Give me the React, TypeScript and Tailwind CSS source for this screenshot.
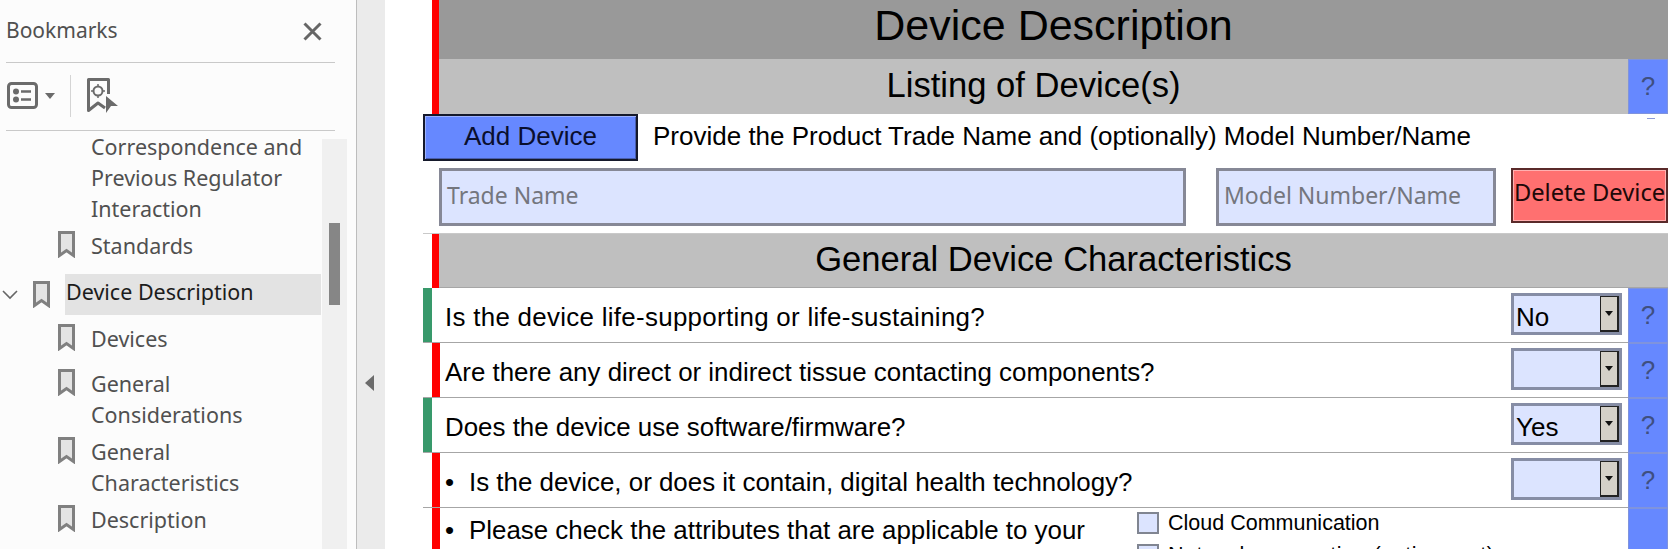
const sans = "font-['Noto_Sans','Open_Sans',sans-serif]";
const arial = "font-['Liberation_Sans',Arial,sans-serif]";

const BookmarkIcon = () => (
	<svg width="17" height="27" viewBox="0 0 17 27" className="shrink-0">
		<path d="M1.5 1.5H15.5V24.5L8.5 19.5L1.5 24.5Z" fill="#e4e4e4" stroke="#808080" strokeWidth="3" />
	</svg>
);

const BookmarkItem = ({ lines, mt }: { lines: string[]; mt: string }) => (
	<div className={`flex pl-[58px] ${mt}`}>
		<BookmarkIcon />
		<div className="ml-4 text-[21.5px] leading-[31px] text-[#505050] -mt-[1px]">
			{lines.map((line) => (
				<div key={line}>{line}</div>
			))}
		</div>
	</div>
);

const Sidebar = () => (
	<div className={`w-[356px] h-full shrink-0 bg-[#fcfcfc] ${sans} flex flex-col overflow-hidden`}>
		<div className="h-[62px] mx-[6px] w-[316px] border-b border-[#c9c9c9] flex items-center justify-between pr-[13px] box-content">
			<span className="text-[21px] text-[#505050]">Bookmarks</span>
			<svg width="19" height="19" viewBox="0 0 19 19">
				<path d="M1.5 1.5L17.5 17.5M17.5 1.5L1.5 17.5" stroke="#666" strokeWidth="3" />
			</svg>
		</div>
		<div className="h-[65px] mx-[6px] w-[329px] border-b border-[#c9c9c9] flex items-center pb-[2px] box-content">
			<svg width="32" height="27" viewBox="0 0 32 27" className="ml-[1px]">
				<rect x="1.5" y="1.5" width="28" height="24" rx="3" fill="none" stroke="#6b6b6b" strokeWidth="3" />
				<circle cx="9" cy="9.5" r="3" fill="#6b6b6b" />
				<circle cx="9" cy="17.5" r="3" fill="#6b6b6b" />
				<path d="M14 9.5H24M14 17.5H24" stroke="#6b6b6b" strokeWidth="2.5" />
			</svg>
			<svg width="10" height="6" viewBox="0 0 10 6" className="ml-[6px]">
				<path d="M0 0H10L5 6Z" fill="#6b6b6b" />
			</svg>
			<div className="w-px h-[42px] bg-[#d4d4d4] ml-[15px]" />
			<svg width="32" height="36" viewBox="0 0 32 36" className="ml-[16px]">
				<path d="M21.5 16V1.5H1.5V32.5L11 25L18 30" fill="none" stroke="#6b6b6b" strokeWidth="3" strokeLinejoin="round" />
				<circle cx="11" cy="13" r="4.5" fill="none" stroke="#6b6b6b" strokeWidth="2" />
				<path d="M11 6V9M11 17V20M4 13H7M15 13H18" stroke="#6b6b6b" strokeWidth="1.5" />
				<path d="M19 18L31 28H24L19 35Z" fill="#6b6b6b" />
			</svg>
		</div>
		<div className="relative flex-1">
			<div className="absolute left-[322px] top-[8px] w-[25px] h-[420px] bg-[#f0f0f0]">
				<div className="absolute left-[7px] top-[84px] w-[11px] h-[82px] bg-[#868686]" />
			</div>
			<div className="pl-[91px] text-[21.5px] leading-[31px] text-[#505050]">
				<div>Correspondence and</div>
				<div>Previous Regulator</div>
				<div>Interaction</div>
			</div>
			<BookmarkItem lines={["Standards"]} mt="mt-[7px]" />
			<div className="flex items-center h-[41px] mt-[13px]">
				<svg width="16" height="10" viewBox="0 0 16 10" className="ml-[2px]">
					<path d="M1 1L8 8L15 1" fill="none" stroke="#666" strokeWidth="1.6" />
				</svg>
				<div className="ml-[15px]">
					<BookmarkIcon />
				</div>
				<div className="ml-[15px] w-[256px] h-[41px] bg-[#e3e3e3] pl-[1px] text-[21.5px] leading-[36px] text-[#1c1c1c]">Device Description</div>
			</div>
			<BookmarkItem lines={["Devices"]} mt="mt-[9px]" />
			<BookmarkItem lines={["General", "Considerations"]} mt="mt-[15px]" />
			<BookmarkItem lines={["General", "Characteristics"]} mt="mt-[7px]" />
			<BookmarkItem lines={["Description"]} mt="mt-[7px]" />
		</div>
	</div>
);

const Help = ({ h, mark = true }: { h: string; mark?: boolean }) => (
	<div className={`w-10 shrink-0 ${h} bg-[#6688ff] border border-[#7f93dd] flex items-center justify-center text-[26px] text-[#3f4f80]`}>{mark ? "?" : ""}</div>
);

const Dropdown = ({ value }: { value: string }) => (
	<div className="w-[111px] h-[42px] mt-[5px] border-[3px] border-[#868da5] bg-[#dce4ff] flex items-stretch justify-between">
		<span className="pl-[2px] text-[26px] leading-[42px] text-black">{value}</span>
		<div className="w-[19px] h-[36px] border-r-2 border-b-2 border-[#222] border-l border-t bg-[#d4d0c8] flex items-center justify-center">
			<svg width="8" height="5" viewBox="0 0 8 5">
				<path d="M0 0H8L4 5Z" fill="#111" />
			</svg>
		</div>
	</div>
);

const Row = ({ kind, text, bullet, value, tracking = "" }: { kind: "green" | "red"; text: string; bullet?: boolean; value: string; tracking?: string }) => (
	<div className="flex h-[55px] border-b border-[#a6a6a6]">
		<div className={`w-[9px] ${kind === "green" ? "bg-[#38996b]" : ""}`} />
		<div className={`w-2 ${kind === "red" ? "bg-[#ff0000]" : ""}`} />
		<div className="flex-1 flex justify-between pr-[6px]">
			<div className={`flex items-center pl-[5px] pt-[5px] text-[25.9px] text-black ${tracking}`}>
				{bullet && <span className="w-[24px]">•</span>}
				{text}
			</div>
			<Dropdown value={value} />
		</div>
		<Help h="h-[55px]" />
	</div>
);

const CheckItem = ({ label, tracking = "" }: { label: string; tracking?: string }) => (
	<div className="flex items-center h-[32px]">
		<div className="w-[22px] h-[22px] border-2 border-[#808591] bg-[#dce4ff]" />
		<span className={`ml-[9px] text-[21.5px] text-black whitespace-nowrap ${tracking}`}>{label}</span>
	</div>
);

const Main = () => (
	<div className={`flex-1 h-full bg-white pl-[38px] pr-[11px] ${arial} overflow-hidden`}>
		<div className="flex h-[59px] pl-[9px]">
			<div className="w-[7px] bg-[#ff0000]" />
			<div className="flex-1 bg-[#999999] flex items-center justify-center pb-[9px] text-[43px] text-black">Device Description</div>
		</div>
		<div className="flex h-[55px] pl-[9px] relative">
			<div className="w-[7px] bg-[#ff0000]" />
			<div className="flex-1 bg-[#bfbfbf] flex items-center justify-center pb-[1px] text-[34.6px] text-black">Listing of Device(s)</div>
			<Help h="h-[55px]" />
			<div className="absolute right-[13px] top-[59px] w-[8px] h-px bg-[#8d9bd8]" />
		</div>
		<div className="flex items-center h-[47px]">
			<div className="w-[215px] h-[47px] border-2 border-[#15192b] bg-[#6688ff] shadow-[inset_1px_1px_0_#9db2ff,inset_-1px_-1px_0_#4a5fb0] flex items-center justify-center pb-[2px] text-[26px] text-[#0a0f2e]">Add Device</div>
			<div className="ml-[15px] pb-[2px] text-[26px] text-black">Provide the Product Trade Name and (optionally) Model Number/Name</div>
		</div>
		<div className={`flex items-start mt-[7px] pl-4 h-[58px] ${sans}`}>
			<div className="w-[747px] h-[58px] border-[3px] border-[#868896] bg-[#dce4ff] flex items-center pl-[5px] pb-[3px] text-[23px] text-[#74767e]">Trade Name</div>
			<div className="ml-[30px] w-[280px] h-[58px] border-[3px] border-[#868896] bg-[#dce4ff] flex items-center pl-[5px] pb-[3px] text-[23px] text-[#74767e] whitespace-nowrap">Model Number/Name</div>
			<div className="ml-[15px] w-[157px] h-[55px] border-2 border-[#5a2a2a] bg-[#ff7070] shadow-[inset_0_0_0_1px_#ffb0b0] flex items-center justify-center pb-[6px] text-[23.7px] text-[#200808] whitespace-nowrap">Delete Device</div>
		</div>
		<div className="mt-[7px] border-t border-[#c9c9c9] flex h-[55px] pl-[9px]">
			<div className="w-[7px] bg-[#ff0000]" />
			<div className="flex-1 bg-[#bfbfbf] border-b border-[#a6a6a6] flex items-center justify-center pb-[2px] text-[34.6px] text-black">General Device Characteristics</div>
		</div>
		<Row kind="green" tracking="tracking-[0.3px]" text="Is the device life-supporting or life-sustaining?" value="No" />
		<Row kind="red" text="Are there any direct or indirect tissue contacting components?" value="" />
		<Row kind="green" text="Does the device use software/firmware?" value="Yes" />
		<Row kind="red" bullet text="Is the device, or does it contain, digital health technology?" value="" />
		<div className="flex h-[60px]">
			<div className="w-[9px]" />
			<div className="w-2 bg-[#ff0000]" />
			<div className="flex-1 flex">
				<div className="w-[697px] pl-[5px] pt-[3px] text-[25.9px] text-black flex">
					<span className="w-[24px]">•</span>
					Please check the attributes that are applicable to your
				</div>
				<div className="-mt-[1px]">
					<CheckItem label="Cloud Communication" />
					<CheckItem label="Network connection (active port)" tracking="tracking-[0.57px]" />
				</div>
			</div>
			<Help h="h-[60px]" mark={false} />
		</div>
	</div>
);

export default function App() {
	return (
		<div className="flex w-[1679px] h-[549px] overflow-hidden bg-white">
			<Sidebar />
			<div className="w-[29px] h-full shrink-0 bg-[#ebebeb] border-l border-[#bdbdbd] flex items-center justify-center">
				<svg width="9" height="16" viewBox="0 0 9 16" className="mt-[217px] mr-[3px]">
					<path d="M9 0V16L0 8Z" fill="#6b6b6b" />
				</svg>
			</div>
			<Main />
		</div>
	);
}
